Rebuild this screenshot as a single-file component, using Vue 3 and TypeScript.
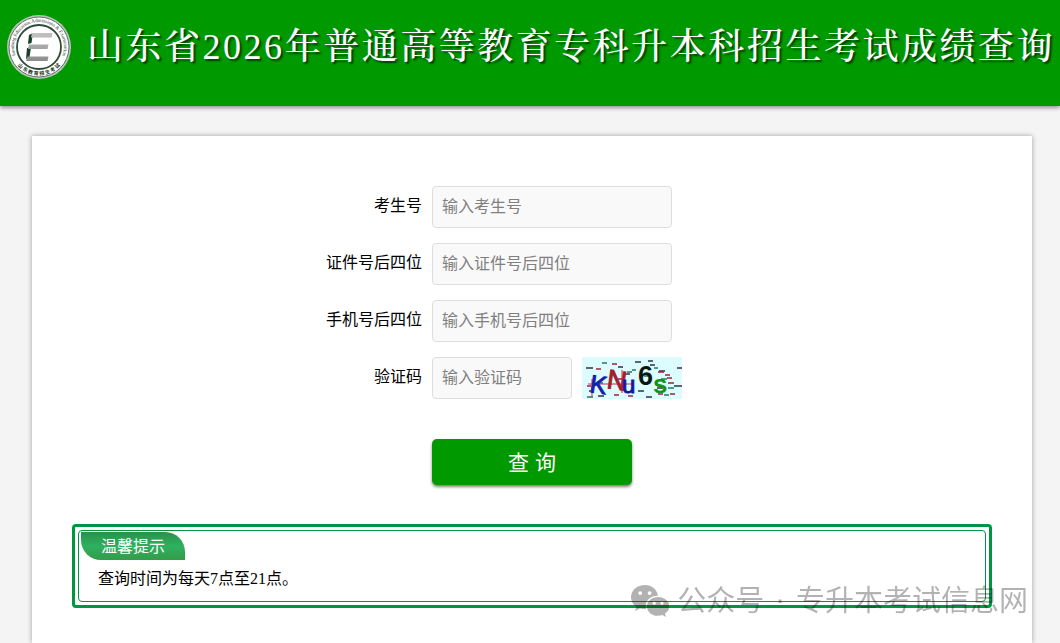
<script setup lang="ts">
import { reactive } from 'vue'

type FieldKey = 'candidate' | 'idTail' | 'phoneTail'

interface Field {
  key: FieldKey
  label: string
  placeholder: string
}

const fields: Field[] = [
  { key: 'candidate', label: '考生号', placeholder: '输入考生号' },
  { key: 'idTail', label: '证件号后四位', placeholder: '输入证件号后四位' },
  { key: 'phoneTail', label: '手机号后四位', placeholder: '输入手机号后四位' },
]

const form = reactive({ candidate: '', idTail: '', phoneTail: '', captcha: '' })
</script>

<template>
  <div class="page">
    <header class="banner">
      <svg class="logo" viewBox="0 0 64 64" aria-hidden="true">
        <defs>
          <path id="arc-top" d="M8.800 41 A24.900 24.900 0 1 1 55.200 41" />
          <path id="arc-bottom" d="M5.200 41 A28.300 28.300 0 0 0 58.800 41" />
          <linearGradient id="bar" x1="0" y1="0" x2="0" y2="1">
            <stop offset="0" stop-color="#c2c2c2" />
            <stop offset="1" stop-color="#8d8d8d" />
          </linearGradient>
        </defs>
        <circle cx="32" cy="32" r="32" fill="#b9c6b9" />
        <circle cx="32" cy="32" r="30" fill="#fff" stroke="#5d7465" stroke-width="1" />
        <circle cx="32" cy="32" r="22" fill="#fff" stroke="#2f4a38" stroke-width="1.8" />
        <text class="seal-en"><textPath href="#arc-top" startOffset="50%" text-anchor="middle">Shandong Education Admissions &amp; Examinations</textPath></text>
        <text class="seal-zh"><textPath href="#arc-bottom" startOffset="50%" text-anchor="middle">山 东 教 育 招 生 考 试</textPath></text>
        <path d="M22 20 L26 18 L24.500 28 L21 29 Z M20 33 L24 32.500 L22.500 42 L19 44 Z" fill="#17402a" />
        <path d="M25 18 H45.500 L44.500 22.500 H24 Z M22 29.500 H41.500 L40.500 34 H21 Z M20.500 41.500 H41.500 L40.500 46 H19 Z" fill="url(#bar)" />
      </svg>
      <h1 class="title">山东省2026年普通高等教育专科升本科招生考试成绩查询</h1>
    </header>

    <main class="card">
      <form class="query" @submit.prevent>
        <template v-for="f in fields" :key="f.key">
          <label class="label" :for="f.key">{{ f.label }}</label>
          <div class="field">
            <input :id="f.key" v-model="form[f.key]" class="input" type="text" :placeholder="f.placeholder" />
          </div>
        </template>
        <label class="label" for="captcha">验证码</label>
        <div class="field">
          <input id="captcha" v-model="form.captcha" class="input short" type="text" placeholder="输入验证码" />
          <svg class="captcha" viewBox="0 0 100 42" role="img" aria-label="验证码图片">
            <rect width="100" height="42" fill="#dcfcfd" />
            <g fill="none" stroke-width="1.4">
              <path stroke="#30304a" d="M4 11h7M36 10h5M42 17h6M53 5h6M68 8h5M77 14h6M95 11h5M92 29h8M56 34h6M75 31h6M16 39h6M64 40h6M7 34h4M66 4h5" />
              <path stroke="#a02040" d="M30 7h5M5 29h4M14 12h5M83 18h5M86 26h6M76 15h6M46 39h5M32 38h5M76 37h5M88 37h5M85 21h5M36 22h6" />
              <path stroke="#28785c" d="M20 6h5M45 15h5M72 11h4M86 31h6M5 40h6M82 38h5M50 13h4M79 22h6M15 26h6M62 19h4" />
            </g>
            <path d="M6 27 H52 M10 40 V22 M40 36 V13" fill="none" stroke="#d2284a" stroke-width="1" />
            <g class="captcha-text">
              <text x="7" y="35" font-size="25" fill="#1520a8" stroke="#1520a8" transform="rotate(8 7 35)">K</text>
              <text x="24" y="31" font-size="27" fill="#a3202b" stroke="#a3202b" transform="rotate(8 24 31)">N</text>
              <text x="40" y="36" font-size="24" fill="#1418a0" stroke="#1418a0">u</text>
              <text x="56" y="28" font-size="27" fill="#0c1711" font-weight="bold">6</text>
              <text x="71" y="36" font-size="26" fill="#149414" font-weight="bold">s</text>
            </g>
          </svg>
        </div>
        <button class="submit" type="submit">查 询</button>
      </form>

      <section class="tip">
        <div class="tip-inner">
          <h2 class="tip-title">温馨提示</h2>
          <p class="tip-text">查询时间为每天7点至21点。</p>
        </div>
      </section>
    </main>

    <div class="watermark">
      <svg class="wechat" viewBox="0 0 38 32" aria-hidden="true">
        <path fill="currentColor" fill-rule="evenodd" d="M14 0C6 0 0 5.400 0 12.200c0 4 2 7.300 5.300 9.500L4 26l5-2.600c2 .6 4 .8 6.200.7C13 17 18.500 10.800 27 10.800C26 4.500 20.800 0 14 0Z M9.200 6.200a1.900 1.900 0 1 1 0 3.800a1.900 1.900 0 0 1 0-3.800Z M18.600 6.200a1.900 1.900 0 1 1 0 3.800a1.900 1.900 0 0 1 0-3.800Z" />
        <path fill="currentColor" fill-rule="evenodd" d="M27 12c-6.300 0-11 4.200-11 9.400s4.700 9.400 11 9.400c1.700 0 3-.3 4.300-.7L35 32l-1-3.400c2.600-1.800 4.400-4.300 4.400-7.200C38.400 16.200 33.300 12 27 12Z M23.200 16.600a1.600 1.600 0 1 1 0 3.200a1.600 1.600 0 0 1 0-3.200Z M31 16.600a1.600 1.600 0 1 1 0 3.200a1.600 1.600 0 0 1 0-3.200Z" />
      </svg>
      <span>公众号<span class="dot"> · </span>专升本考试信息网</span>
    </div>
  </div>
</template>

<style>
body {
  margin: 0;
  background: #f4f4f4;
}
</style>

<style scoped>
.page {
  display: flex;
  flex-direction: column;
  min-height: 100vh;
  box-sizing: border-box;
  overflow: hidden;
  font-family: "Liberation Serif", "Noto Sans CJK SC", sans-serif;
  font-size: 16px;
  font-weight: 400;
  color: #000;
}

.banner {
  display: flex;
  align-items: center;
  gap: 16px;
  box-sizing: border-box;
  padding: 15px 0 27px 7px;
  background: #090;
  box-shadow: 0 2px 4px rgba(0, 0, 0, 0.4);
}

.logo {
  flex: none;
  width: 64px;
  height: 64px;
  overflow: visible;
}

.seal-en {
  font: 5px "Liberation Serif", serif;
  fill: #23382b;
}

.seal-zh {
  font: bold 5px "Noto Sans CJK SC", sans-serif;
  fill: #1c2f23;
}

.title {
  margin: 0;
  font-family: "Liberation Serif", "Noto Serif CJK SC", "Noto Sans CJK SC", serif;
  font-size: 36px;
  line-height: 64px;
  font-weight: 500;
  letter-spacing: 0.07em;
  white-space: nowrap;
  color: #fff;
  text-shadow: 2px 2px 2px rgba(0, 0, 0, 0.6);
}

.card {
  flex: 1;
  margin: 30px 28px 0 32px;
  padding: 50px 40px 35px;
  background: #fff;
  box-shadow: 0 0 5px rgba(0, 0, 0, 0.35);
}

.query {
  display: grid;
  grid-template-columns: minmax(0, 1fr) 200px minmax(0, 1fr);
  row-gap: 15px;
}

.label {
  padding-right: 10px;
  line-height: 40px;
  text-align: right;
}

.field {
  grid-column: 2 / 4;
  display: flex;
  gap: 10px;
}

.input {
  box-sizing: border-box;
  width: 240px;
  height: 42px;
  padding: 0 9px;
  border: 1px solid #ddd;
  border-radius: 4px;
  background: #f9f9f9;
  font: inherit;
  color: #000;
  outline: none;
}

.input::placeholder {
  color: #808080;
}

.short {
  width: 140px;
}

.captcha {
  width: 100px;
  height: 42px;
}

.captcha-text {
  font-family: "Liberation Sans", sans-serif;
}

.submit {
  grid-column: 2;
  height: 46px;
  margin-top: 25px;
  padding: 0 0 3px;
  border: 0;
  border-radius: 5px;
  background: #090;
  box-shadow: 0 2px 3px rgba(0, 0, 0, 0.5);
  font-family: "Liberation Sans", "Noto Sans CJK SC", sans-serif;
  font-size: 21px;
  color: #fff;
  cursor: pointer;
}

.tip {
  margin-top: 39px;
  padding: 3px;
  border: 3px solid #009540;
  border-radius: 4px;
}

.tip-inner {
  box-sizing: border-box;
  min-height: 72px;
  padding: 1px 2px 2px;
  border: 1px solid #009540;
  border-radius: 4px;
}

.tip-title {
  box-sizing: border-box;
  width: fit-content;
  height: 28px;
  margin: 0;
  padding: 0 20px;
  border-radius: 0 20px 0 20px;
  background: linear-gradient(#2a9048, #2fb061 50%, #339c48);
  font-size: 16px;
  line-height: 30px;
  font-weight: 400;
  color: #fff;
}

.tip-text {
  margin: 0;
  padding: 0 17px;
  line-height: 38px;
}

.watermark {
  position: fixed;
  right: 32px;
  bottom: 22px;
  display: flex;
  align-items: center;
  gap: 8px;
  font-family: "DejaVu Sans", "Noto Sans CJK SC", sans-serif;
  font-size: 29px;
  line-height: 40px;
  white-space: nowrap;
  color: #000;
  opacity: 0.3;
  pointer-events: none;
}

.dot {
  padding: 0 2px;
}

.wechat {
  width: 38px;
  height: 32px;
}
</style>
